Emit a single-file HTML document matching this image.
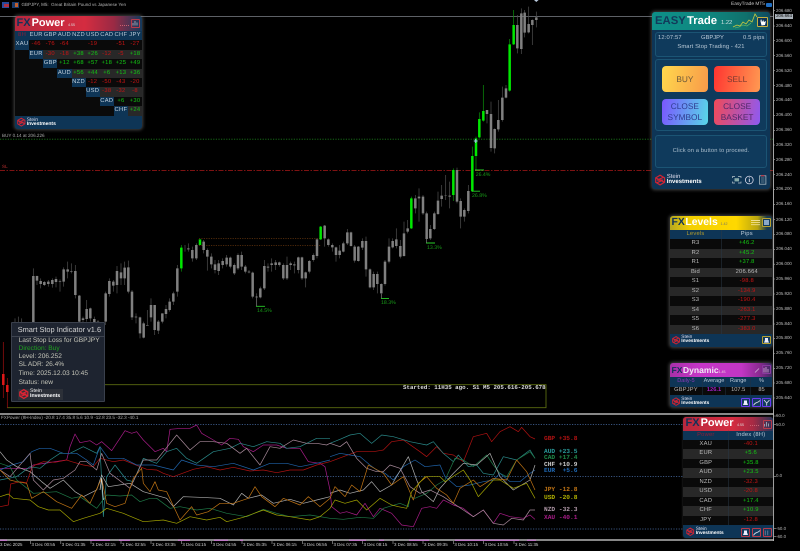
<!DOCTYPE html>
<html><head><meta charset="utf-8"><title>EasyTrade MT5</title>
<style>
html,body{margin:0;padding:0;background:#000;}
body{position:relative;width:800px;height:551px;overflow:hidden;font-family:"Liberation Sans",sans-serif;color:#ccc;text-rendering:geometricPrecision;}
#w{position:absolute;left:0;top:0;width:800px;height:551px;filter:blur(.32px);}
svg{position:absolute;left:0;top:0;overflow:visible;}
.t{position:absolute;white-space:nowrap;line-height:1;}
.p{position:absolute;box-sizing:border-box;border-radius:3px;background:#0e3556;box-shadow:0 0 3px 1px rgba(150,150,150,.45);}
.h{position:absolute;box-sizing:border-box;border-radius:3px 3px 0 0;}
.u{position:absolute;background:#0a0a0a;}
.a{position:absolute;left:776px;font-size:4.4px;color:#bbb;white-space:nowrap;line-height:1;}
.x{position:absolute;top:543px;font-size:4.4px;color:#ccc;white-space:nowrap;line-height:1;}
.m{position:absolute;left:15px;width:127.3px;height:9.45px;display:flex;font-size:5.8px;letter-spacing:.3px;line-height:9.45px;}
.m>*{width:14.14px;flex:none;text-align:center;font-style:normal;font-weight:normal;}
.k{background:#0a0a0a;}
.l{background:#0e3556;color:#c4d2de;}
.g{background:#282828;}.d{background:#0a0a0a;}
.n{color:#c81414;}.y{color:#14c814;}
.r{position:absolute;height:9.47px;display:flex;font-size:5.8px;letter-spacing:.2px;line-height:9.47px;color:#bbb;}
.r>span{text-align:center;display:block;}
.c1{width:51.6px;box-sizing:border-box;}.c2{width:51px;}
.b1{width:45px;box-sizing:border-box;}.b2{width:45px;}
.lb{position:absolute;font-size:6.2px;font-family:"Liberation Mono",monospace;white-space:pre;line-height:1;font-weight:bold;}
.btn{position:absolute;box-sizing:border-box;border-radius:4px;width:45.7px;height:26px;font-size:8.3px;line-height:11px;text-align:center;display:flex;align-items:center;justify-content:center;}
.bx{position:absolute;box-sizing:border-box;left:655.3px;width:112px;border:1px solid #1b5474;border-radius:3px;background:#0f3a5c;}
.ib{position:absolute;box-sizing:border-box;width:9px;height:8.6px;border-radius:1px;}
</style></head><body><div id="w">

<!-- top bar -->
<div style="position:absolute;left:2px;top:2px;width:7px;height:6px;background:#2a4a9a"></div>
<div style="position:absolute;left:4px;top:4px;width:5px;height:3px;background:#b03040"></div>
<div style="position:absolute;left:12px;top:2px;width:7px;height:6px;background:#1a3a6a"></div>
<div style="position:absolute;left:15px;top:3px;width:3px;height:4px;background:#c06030"></div>
<div class="t" style="left:21.5px;top:3px;font-size:4.5px;color:#b4b4b4">GBPJPY, M5:&nbsp; Great Britain Pound vs Japanese Yen</div>
<div class="t" style="left:731px;top:3px;font-size:4.8px;color:#c4c4c4">EasyTrade MT5</div>
<div style="position:absolute;left:766px;top:3px;width:6px;height:4px;background:#1f6fc4;border-radius:1px"></div>
<div style="position:absolute;left:0;top:16px;width:773px;height:.8px;background:#5d6066"></div>

<svg width="800" height="551">
 <path d="M0 139.2H773" stroke="#1a7a1a" stroke-width=".8" stroke-dasharray="1.2 1.4" fill="none"/>
 <path d="M0 170.6H773" stroke="#a81818" stroke-width=".8" stroke-dasharray="5 1.5 1.5 1.5" fill="none"/>
 <path d="M199 238.3H321M199 245.7H321" stroke="#7a4012" stroke-width=".7" stroke-dasharray="1.2 1.2" fill="none"/>
 <path d="M105 384.7H546V407.7H7" stroke="#5a6a10" stroke-width=".9" fill="none"/>
 <path d="M3.3 342V374M3.3 385V398M7.3 378V408" stroke="#a01010" stroke-width=".7"/>
 <path d="M3.3 374V385M7.3 385V392" stroke="#e01818" stroke-width="2.5"/>
 <g transform="translate(0,210) scale(.33333)" fill="none">
  <path stroke="#4c4c4c" stroke-width="2.2" d="M45 325V345M55 320V345M65 325V345M100 175V340M111 197V225M122 205V235M133 213V228M145 210V230M157 205V233M168 200V232M180 208V245M191 172V230M203 155V205M214 160V190M226 165V265M238 255V340M249 320V340M260 270V335M271 293V335M283 320V345M294 330V345M317 245V345M328 205V260M340 210V245M351 168V250M363 160V225M374 155V225M385 152V250M396 240V330M408 310V340M420 320V385M431 335V385M442 300V345M453 265V335M464 285V375M475 330V372M487 310V340M498 285V325M509 265V305M520 245V285M532 165V260M555 105V125M565 100V125M577 110V155M589 100V150M611 90V130M622 115V182M634 130V175M645 150V190M656 150V195M668 145V175M680 135V170M691 140V175M703 160V195M714 130V180M725 125V180M736 165V190M747 180V190M758 185V265M770 250V290M781 230V265M793 150V240M804 160V185M815 145V185M827 150V180M838 155V170M850 160V210M861 140V210M872 155V180M883 155V190M895 140V190M906 140V210M917 185V232M928 150V190M940 130V155M951 85V145M974 45V110M985 85V110"/>
  <path stroke="#808080" stroke-width="7.5" d="M100 198V340M111 198V212M122 213V222M133 216V225M145 215V222M157 210V222M168 207V216M180 213V215M191 178V215M203 178V185M214 183V185M226 183V255M238 257V335M249 325V330M260 297V327M271 295V325M283 327V338M294 335V340M317 250V335M328 213V252M340 215V227M351 183V225M363 187V205M374 173V205M385 172V245M396 245V322M408 320V322M420 322V370M431 340V383M442 345V347M453 285V322M464 285V360M475 335V362M487 310V335M498 297V312M509 275V300M520 250V275M532 175V245M565 115V118M577 120V145M589 105V145M611 95V120M622 120V140M634 140V163M645 163V180M656 160V183M668 153V165M680 143V163M691 143V170M703 165V190M714 135V175M725 135V170M736 170V185M747 185V187M758 188V260M770 260V262M781 235V262M793 168V235M804 170V173M815 160V165M827 157V165M838 157V165M850 165V205M861 165V205M872 160V165M883 163V166M895 142V180M906 142V205M917 187V205M928 153V185M940 135V150M951 88V138M974 47V85M985 88V105"/>
  <path stroke="#0a8a0a" stroke-width="2.2" d="M544 105V185M962 48V90"/>
  <path stroke="#00e800" stroke-width="7.5" d="M544 113V175M600 88V105M962 50V88"/>
 </g>
 <g transform="translate(330,130) scale(.33333)" fill="none">
  <path stroke="#4c4c4c" stroke-width="2.2" d="M7 340V365M18 350V395M29 345V385M40 335V367M52 297V345M63 305V350M74 345V398M85 348V395M97 325V360M108 320V440M120 415V475M131 425V480M142 425V490M154 460V505M165 390V467M177 325V400M188 325V355M199 295V355M211 330V385M222 275V380M233 270V310M256 195V250M267 175V275M279 195V255M290 245V340M301 285V330M313 245V300M324 185V255M335 165V230M347 135V210M359 155V235M381 113V220M392 205V295M403 235V275M415 165V250"/>
  <path stroke="#808080" stroke-width="7.5" d="M7 345V352M18 352V375M29 362V375M40 340V365M52 307V340M63 307V348M74 350V392M85 350V393M97 333V353M108 333V418M120 418V472M131 432V472M142 432V462M154 462V490M165 395V462M177 350V395M188 333V352M199 328V348M211 348V380M222 310V378M233 295V305M256 205V235M267 200V205M279 200V250M290 250V327M301 297V325M313 250V297M324 212V252M335 197V207M347 197V198M359 197V200M381 120V215M392 213V260M403 240V260M415 183V243"/>
  <path stroke="#0a8a0a" stroke-width="2.2" d="M244 200V297M370 115V213M427 50V186M438 20V120"/>
  <path stroke="#00e800" stroke-width="7.5" d="M244 205V295M370 120V195M427 78V183M438 25V78"/>
 </g>
 <g transform="translate(440,0) scale(.33333)" fill="none">
  <path stroke="#4c4c4c" stroke-width="2.2" d="M141 330V370M153 305V455M164 385V460M175 300V395M187 260V365M198 255V295M232 45V160M244 25V162M254 30V112M266 20V100M277 58V135M289 35V82"/>
  <path stroke="#808080" stroke-width="7.5" d="M141 330V342M153 342V444M164 387V445M175 360V388M187 293V360M198 265V293M232 75V145M244 40V147M254 38V98M266 72V97M277 60V75M289 52V60"/>
  <path stroke="#0a8a0a" stroke-width="2.2" d="M118 337V415M130 255V365M209 117V275M221 30V135"/>
  <path stroke="#00e800" stroke-width="7.5" d="M118 357V412M130 333V362M209 133V272M221 75V133"/>
 </g>
 <path d="M256 306.3H265M381 298.6H389M426 243H435M471.5 191.2H480M475 170H484" stroke="#28d028" stroke-width=".9" fill="none"/>
 <path d="M256.5 306V296M381.5 298V294M426.5 243V238" stroke="#777" stroke-width=".5" fill="none"/>
 <path d="M473.8 141H477.6M475.7 139V143" stroke="#9fc0e8" stroke-width="1"/>
 <path d="M534 0H538.6L536.3 2Z" fill="#b8c8dc"/>
</svg>

<div class="t" style="left:2px;top:133.6px;font-size:4.6px;color:#aaa">BUY 0.14 at 206.226</div>
<div class="t" style="left:2px;top:165px;font-size:4.6px;color:#c03030">SL</div>
<div class="t" style="left:257px;top:308.5px;font-size:5.2px;color:#189a18">14.5%</div>
<div class="t" style="left:381px;top:301.2px;font-size:5.2px;color:#189a18">18.3%</div>
<div class="t" style="left:427px;top:246.2px;font-size:5.2px;color:#189a18">13.3%</div>
<div class="t" style="left:472px;top:194.2px;font-size:5.2px;color:#189a18">26.8%</div>
<div class="t" style="left:475.7px;top:172.8px;font-size:5.2px;color:#189a18">26.4%</div>
<div class="t" style="left:403px;top:385.4px;font-size:5.8px;font-family:'Liberation Mono',monospace;font-weight:bold;color:#ddd">Started: 11H35 ago. S1 M5 205.616-205.678</div>

<!-- indicator window -->
<div style="position:absolute;left:0;top:413px;width:774px;height:2.2px;background:#888"></div>
<div style="position:absolute;left:0;top:539px;width:774px;height:2.4px;background:#888"></div>
<svg width="800" height="551">
 <path d="M0 540.3H7M90 540.3H110M119 540.3H130M178 540.3H190M214 540.3H228M240 540.3H243M349 540.3H366M379 540.3H384M409 540.3H429M455 540.3H519M527 540.3H536" stroke="#d070d8" stroke-width="1" fill="none"/>
 <path d="M0 424.6H683M0 476.6H683M0 529H683" stroke="#4a6fa8" stroke-width=".7" stroke-dasharray="1.2 1.4" fill="none"/>
 <g transform="translate(0,410) scale(.33333)" fill="none" stroke-width="2.1" stroke-linejoin="round">
  <polyline stroke="#a81c88" points="0,175 90,175 100,165 200,150 210,110 225,72 240,98 270,92 290,105 305,95 335,122 375,62 395,70 410,65 430,90 465,125 490,115 500,125 510,58 545,55 570,55 590,45 605,70 640,90 665,105 690,85 715,88 730,110 760,125 790,105 830,105 860,115 900,115 925,155 960,160 975,170 990,240"/>
  <polyline stroke="#b01212" points="0,290 25,285 32,222 60,215 80,218 95,175 105,165 130,155 165,157 200,150 215,155 250,165 280,170 300,145 340,155 370,150 420,170 440,178 470,180 490,190 520,200 580,178 620,170 660,180 700,172 750,183 790,180 830,188 870,180 910,180 950,165 990,155"/>
  <polyline stroke="#2a8a8a" points="0,210 50,200 90,170 120,175 150,150 180,130 210,130 250,110 290,130 300,110 310,320 320,200 345,165 380,210 400,215 430,145 470,160 500,125 530,115 560,145 590,160 640,125 690,115 720,100 760,110 800,95 840,100 860,115 900,110 950,85 990,85"/>
  <polyline stroke="#1f7a48" points="0,160 30,170 50,210 100,250 170,245 215,265 240,260 290,295 320,255 360,258 395,255 420,275 450,265 470,265 510,295 540,290 590,300 630,295 680,310 740,320 790,298 830,310 870,320 930,315 990,325"/>
  <polyline stroke="#1f62a8" points="0,180 35,165 70,155 95,125 120,115 150,115 190,130 230,130 260,150 280,165 300,110 325,145 370,145 410,165 460,165 520,180 545,150 590,165 640,170 700,160 760,180 810,160 860,160 900,170 950,160 990,150"/>
  <polyline stroke="#aeaeae" points="0,125 20,150 50,170 90,185 125,215 150,235 190,210 225,245 250,260 290,240 305,195 325,230 390,220 430,245 500,265 520,290 550,260 600,262 660,265 700,285 725,250 745,265 785,255 820,280 870,268 910,280 950,270 990,260"/>
  <polyline stroke="#a88a9a" points="0,180 30,200 90,130 100,210 130,240 160,210 190,205 225,180 240,155 260,155 290,180 305,130 330,190 390,235 430,150 470,150 490,125 530,75 570,120 600,95 640,95 680,100 720,130 740,115 780,165 810,110 840,115 880,90 920,100 950,100 980,105 990,100"/>
  <polyline stroke="#c07414" points="0,180 30,210 50,215 80,220 95,265 130,245 170,275 215,295 245,255 270,280 305,205 320,280 345,290 375,280 400,205 425,175 430,220 450,245 465,215 475,240 500,245 540,330 575,290 590,315 625,305 660,280 700,280 745,265 765,230 785,260 825,290 850,265 900,285 925,260 960,290 990,265"/>
  <polyline stroke="#a2a200" points="0,260 25,252 40,265 90,270 115,290 145,300 180,300 220,335 250,325 300,310 320,295 370,310 430,335 490,330 530,340 570,320 620,330 660,322 680,335 730,322 790,300 830,315 870,320 930,330 960,320 990,295"/>
  <polyline stroke="#d8d8d8" points="300,240 305,205 310,270"/>
 </g>
 <g transform="translate(330,410) scale(.33333)" fill="none" stroke-width="2.1" stroke-linejoin="round">
  <polyline stroke="#a81c88" points="0,240 5,290 30,310 50,305 80,315 105,280 130,320 150,295 185,310 215,345 250,350 275,295 300,290 320,295 340,270 370,285 400,295 430,320 460,300 490,340 510,310 540,320 580,325 600,315 615,328"/>
  <polyline stroke="#b01212" points="0,155 40,140 80,125 130,125 160,120 185,95 220,90 270,125 290,140 320,110 340,130 370,135 400,155 430,80 470,70 485,95 510,65 540,50 565,65 575,52 600,80 615,87"/>
  <polyline stroke="#2a8a8a" points="0,100 30,88 60,75 90,70 125,100 155,75 190,80 240,95 290,105 310,95 340,130 370,155 385,135 415,170 440,165 460,190 490,195 520,140 560,150 600,120 615,145"/>
  <polyline stroke="#1f7a48" points="0,325 40,328 90,322 130,325 160,295 210,280 235,290 240,260 255,265 290,250 320,225 345,210 375,145 400,150 430,170 470,135 490,165 510,190 530,200 560,150 600,125 615,145"/>
  <polyline stroke="#1f62a8" points="0,140 30,130 60,135 90,140 120,165 140,180 165,190 190,210 220,170 255,150 285,170 330,165 345,200 380,230 420,225 460,215 490,210 510,190 540,215 570,215 600,190 615,180"/>
  <polyline stroke="#aeaeae" points="0,250 30,240 60,250 100,240 125,215 150,245 185,225 235,140 260,210 275,245 310,275 330,235 370,190 400,160 440,165 480,130 510,200 550,240 600,210 615,165"/>
  <polyline stroke="#a88a9a" points="0,100 30,110 50,95 80,145 110,175 140,185 160,185 180,165 210,175 240,230 270,250 300,240 340,260 370,280 400,300 430,320 460,300 490,340 520,345 545,325 580,330 600,300 615,300"/>
  <polyline stroke="#c07414" points="0,265 15,230 45,260 65,225 90,245 115,165 160,190 185,225 220,200 250,270 265,220 290,200 320,235 350,255 370,280 390,235 430,210 450,230 490,205 530,210 560,150 590,185 615,240"/>
  <polyline stroke="#a2a200" points="0,295 15,270 45,280 80,270 110,300 150,265 185,285 205,290 230,295 245,245 285,200 330,200 345,215 400,180 420,210 445,260 490,210 510,210 550,235 590,220 615,265"/>
 </g>
 <path d="M773.5 0V541" stroke="#b8b8b8" stroke-width=".9" fill="none"/>
 <path d="M773 10.7h2M773 26h2M773 40.7h2M773 55.7h2M773 70.7h2M773 85.7h2M773 100.3h2M773 115.3h2M773 130.3h2M773 145h2M773 159.7h2M773 174.7h2M773 189.3h2M773 204.6h2M773 219.7h2M773 234.5h2M773 249.4h2M773 264.2h2M773 279h2M773 294h2M773 309h2M773 324h2M773 338.6h2M773 353.5h2M773 368.4h2M773 383h2M773 398h2M774 416h2M774 424.7h2M774 476.4h2M774 528.7h2M774 536.7h2" stroke="#aaa" stroke-width=".6" fill="none"/>
 <path d="M30.5 541v3M60.8 541v3M91 541v3M121 541v3M151 541v3M181.4 541v3M211.6 541v3M242 541v3M272 541v3M302.4 541v3M332.5 541v3M362.6 541v3M393 541v3M423 541v3M453.4 541v3M483.6 541v3M514 541v3" stroke="#aaa" stroke-width=".6" fill="none"/>
</svg>
<div class="t" style="left:1px;top:416px;font-size:4.6px;color:#aaa">FXPower (8H-Index) -20.8 17.4 35.8 5.6 10.9 -12.8 23.5 -32.3 -40.1</div>
<div class="lb" style="left:544px;top:436px;color:#b01212">GBP +35.8</div>
<div class="lb" style="left:544px;top:449px;color:#2a9a9a">AUD +23.5</div>
<div class="lb" style="left:544px;top:455.4px;color:#1f8a4a">CAD +17.4</div>
<div class="lb" style="left:544px;top:461.6px;color:#c8c8c8">CHF +10.9</div>
<div class="lb" style="left:544px;top:468px;color:#1f6ab8">EUR&nbsp; +5.6</div>
<div class="lb" style="left:544px;top:487px;color:#c07414">JPY -12.8</div>
<div class="lb" style="left:544px;top:495px;color:#b0b000">USD -20.8</div>
<div class="lb" style="left:544px;top:507px;color:#b098a8">NZD -32.3</div>
<div class="lb" style="left:544px;top:515px;color:#a81c88">XAU -40.1</div>

<div class="a" style="top:8.5px">206.680</div><div class="a" style="top:23.8px">206.640</div><div class="a" style="top:38.5px">206.600</div><div class="a" style="top:53.5px">206.560</div><div class="a" style="top:68.5px">206.520</div><div class="a" style="top:83.5px">206.480</div><div class="a" style="top:98.1px">206.440</div><div class="a" style="top:113.1px">206.400</div><div class="a" style="top:128.1px">206.360</div><div class="a" style="top:142.8px">206.320</div><div class="a" style="top:157.5px">206.280</div><div class="a" style="top:172.5px">206.240</div><div class="a" style="top:187.1px">206.200</div><div class="a" style="top:202.4px">206.160</div><div class="a" style="top:217.5px">206.120</div><div class="a" style="top:232.3px">206.080</div><div class="a" style="top:247.2px">206.040</div><div class="a" style="top:262px">206.000</div><div class="a" style="top:276.8px">205.960</div><div class="a" style="top:291.8px">205.920</div><div class="a" style="top:306.8px">205.880</div><div class="a" style="top:321.8px">205.840</div><div class="a" style="top:336.4px">205.800</div><div class="a" style="top:351.3px">205.760</div><div class="a" style="top:366.2px">205.720</div><div class="a" style="top:380.8px">205.680</div><div class="a" style="top:395.8px">205.640</div>
<div class="a" style="top:14px;left:775px;width:18px;height:5px;background:#aab2ba;color:#111;text-align:center">206.664</div>
<div class="a" style="top:413.8px">60.0</div><div class="a" style="top:422.5px">50.0</div><div class="a" style="top:474.2px">0.0</div><div class="a" style="top:526.5px">-50.0</div><div class="a" style="top:534.5px">-60.0</div>

<div class="x" style="left:0">3 Dec 2025</div><div class="x" style="left:31.5px">3 Dec 00:55</div><div class="x" style="left:61.8px">3 Dec 01:35</div><div class="x" style="left:92px">3 Dec 02:15</div><div class="x" style="left:122px">3 Dec 02:55</div><div class="x" style="left:152px">3 Dec 03:35</div><div class="x" style="left:182.4px">3 Dec 04:15</div><div class="x" style="left:212.6px">3 Dec 04:55</div><div class="x" style="left:243px">3 Dec 05:35</div><div class="x" style="left:273px">3 Dec 06:15</div><div class="x" style="left:303.4px">3 Dec 06:55</div><div class="x" style="left:333.5px">3 Dec 07:35</div><div class="x" style="left:363.6px">3 Dec 08:15</div><div class="x" style="left:394px">3 Dec 08:55</div><div class="x" style="left:424px">3 Dec 09:35</div><div class="x" style="left:454.4px">3 Dec 10:15</div><div class="x" style="left:484.6px">3 Dec 10:55</div><div class="x" style="left:515px">3 Dec 11:35</div>

<!-- FXPower matrix panel -->
<div class="p" style="left:15px;top:16px;width:127.3px;height:113px"></div>
<div class="u" style="left:15px;top:40.15px;width:127.3px;height:75.6px"></div>
<div class="h" style="left:15px;top:16px;width:127.3px;height:14.8px;background:linear-gradient(90deg,#b8283e 0,#d42c40 55%,#9a2a44 78%,#143a5c 100%)"></div>
<div class="t" style="left:16.5px;top:17.8px;font-size:11px;font-weight:bold;color:#123258">FX<span style="color:#fff;margin-left:1px">Power</span></div>
<div class="t" style="left:68px;top:23.5px;font-size:3.6px;color:#ddd">4.55</div>
<div style="position:absolute;left:120px;top:24.5px;width:9px;height:1px;background:repeating-linear-gradient(90deg,#c86070 0 1px,transparent 1px 2px)"></div>
<div class="ib" style="left:131px;top:19px;border:.8px solid #b83a4a"></div>
<svg width="800" height="551"><path d="M133 25.5V23M135 25.5V21M137 25.5V22.5" stroke="#9ab" stroke-width=".9"/></svg>
<div class="m" style="top:30.7px;background:#0e3556;color:#b8c8d6"><span style="color:#8a2038">8H</span><span>EUR</span><span>GBP</span><span>AUD</span><span>NZD</span><span>USD</span><span>CAD</span><span>CHF</span><span>JPY</span></div>
<div class="m d" style="top:40.15px"><span class="l">XAU</span><i class="n">-46</i><i class="n">-76</i><i class="n">-64</i><i></i><i class="n">-19</i><i></i><i class="n">-51</i><i class="n">-27</i></div>
<div class="m g" style="top:49.6px"><i class="k"></i><span class="l">EUR</span><i class="n">-30</i><i class="n">-18</i><i class="y">+38</i><i class="y">+26</i><i class="n">-12</i><i class="n">-5</i><i class="y">+18</i></div>
<div class="m d" style="top:59.05px"><i class="k"></i><i class="k"></i><span class="l">GBP</span><i class="y">+12</i><i class="y">+68</i><i class="y">+57</i><i class="y">+18</i><i class="y">+25</i><i class="y">+49</i></div>
<div class="m g" style="top:68.5px"><i class="k"></i><i class="k"></i><i class="k"></i><span class="l">AUD</span><i class="y">+56</i><i class="y">+44</i><i class="y">+6</i><i class="y">+13</i><i class="y">+36</i></div>
<div class="m d" style="top:77.95px"><i class="k"></i><i class="k"></i><i class="k"></i><i class="k"></i><span class="l">NZD</span><i class="n">-12</i><i class="n">-50</i><i class="n">-43</i><i class="n">-20</i></div>
<div class="m g" style="top:87.4px"><i class="k"></i><i class="k"></i><i class="k"></i><i class="k"></i><i class="k"></i><span class="l">USD</span><i class="n">-38</i><i class="n">-32</i><i class="n">-8</i></div>
<div class="m d" style="top:96.85px"><i class="k"></i><i class="k"></i><i class="k"></i><i class="k"></i><i class="k"></i><i class="k"></i><span class="l">CAD</span><i class="y">+6</i><i class="y">+30</i></div>
<div class="m g" style="top:106.3px"><i class="k"></i><i class="k"></i><i class="k"></i><i class="k"></i><i class="k"></i><i class="k"></i><i class="k"></i><span class="l">CHF</span><i class="y">+24</i></div>
<svg width="800" height="551"><g transform="translate(16.8,117.6) scale(.9)" fill="none" stroke="#d02434" stroke-width="1.1"><path d="M1 3L5 .6 9 3V7L5 9.4 1 7ZM1.5 3.2L8.5 6.8M8.2 2.4L2.5 5 7.5 5 1.8 7.6"/></g></svg>
<div class="t" style="left:26.7px;top:117.6px;font-size:5px;color:#dde;line-height:4.3px"><span>Stein</span><br><b style="color:#fff">Investments</b></div>

<!-- EasyTrade panel -->
<div class="p" style="left:652.3px;top:12.3px;width:117.7px;height:177px"></div>
<div class="h" style="left:652.3px;top:12.3px;width:117.7px;height:17.7px;background:linear-gradient(90deg,#0e8f88 0,#0f8880 45%,#10706c 80%,#0f4a60 100%)"></div>
<svg width="800" height="551"><polyline points="733,27 737,25 740,26 743,22 746,24 749,20 752,22 755,14 757,17" fill="none" stroke="#c8c840" stroke-width=".8"/><polyline points="735,28 739,27 743,25 747,26 751,23" fill="none" stroke="#6fbf60" stroke-width=".6"/></svg>
<div class="t" style="left:655px;top:15.6px;font-size:11.3px;font-weight:bold;color:#123a5a">EASY<span style="color:#fff;margin-left:1.2px">Trade</span></div>
<div class="t" style="left:721px;top:20.5px;font-size:5.8px;color:#d4e4e4">1.22</div>
<div class="ib" style="left:757px;top:16.7px;width:11px;height:10.6px;border:.8px solid #c8b040;background:#0e3556"></div>
<svg width="800" height="551"><path d="M760 19L761.5 22 761 19 763 22 764 19.5 764 22 766 21 765 25 761.5 25.5Z" fill="#fff"/></svg>
<div class="bx" style="top:32.3px;height:24.4px"></div>
<div class="t" style="left:658px;top:35.7px;font-size:5.8px;color:#b8c8d6;letter-spacing:.15px">12:07:57</div>
<div class="t" style="left:701px;top:35.7px;font-size:5.8px;color:#b8c8d6">GBPJPY</div>
<div class="t" style="right:35.5px;top:35.7px;font-size:5.8px;color:#b8c8d6;letter-spacing:.15px">0.5 pips</div>
<div class="t" style="left:655px;width:112px;text-align:center;top:44.6px;font-size:5.8px;color:#b8c8d6;letter-spacing:.1px">Smart Stop Trading - 421</div>
<div class="bx" style="top:59.3px;height:71.7px"></div>
<div class="btn" style="left:662px;top:66px;background:linear-gradient(100deg,#ffd84c,#f89a4a);color:#6e5a3a">BUY</div>
<div class="btn" style="left:714.3px;top:66px;background:linear-gradient(100deg,#ff3430,#ff9a52);color:#7a3a30">SELL</div>
<div class="btn" style="left:662px;top:99px;background:linear-gradient(100deg,#7a56ff,#58d8e8);color:#303c90">CLOSE<br>SYMBOL</div>
<div class="btn" style="left:714.3px;top:99px;background:linear-gradient(100deg,#f04a58,#8e5af2);color:#502868">CLOSE<br>BASKET</div>
<div class="bx" style="top:135px;height:33.3px"></div>
<div class="t" style="left:655px;width:112px;text-align:center;top:149px;font-size:5.8px;color:#a8bccb;letter-spacing:.1px">Click on a button to proceed.</div>
<svg width="800" height="551"><g transform="translate(654.6,174.6) scale(1.1)" fill="none" stroke="#d02434" stroke-width="1.1"><path d="M1 3L5 .6 9 3V7L5 9.4 1 7ZM1.5 3.2L8.5 6.8M8.2 2.4L2.5 5 7.5 5 1.8 7.6"/></g>
<path d="M732.5 178V176.5H735M738 176.5H741V178M741 181.5V183H738M735 183H732.5V181.5" fill="none" stroke="#b8c4cc" stroke-width=".7"/><rect x="734.5" y="178.2" width="4.5" height="3.2" fill="#8aa"/>
<circle cx="749.3" cy="180" r="3.9" fill="none" stroke="#dde" stroke-width=".8"/><path d="M749.3 178.8V182M749.3 177.4v.7" stroke="#dde" stroke-width=".9"/>
<rect x="759.5" y="175.8" width="6.4" height="8.4" fill="none" stroke="#a8b8c0" stroke-width=".8"/><path d="M761 178H764.5M761 180H764.5M761 182H764.5" stroke="#a8b8c0" stroke-width=".5"/><rect x="761" y="175" width="3.4" height="1.4" fill="#b04050"/></svg>
<div class="t" style="left:666.7px;top:175.4px;font-size:6px;color:#dde;line-height:5px">Stein<br><b style="color:#fff">Investments</b></div>

<!-- FXLevels panel -->
<div class="p" style="left:669.7px;top:215.7px;width:102.6px;height:131.6px"></div>
<div class="u" style="left:669.7px;top:239.4px;width:102.6px;height:94.6px"></div>
<div class="h" style="left:669.7px;top:215.7px;width:102.6px;height:14.6px;background:linear-gradient(90deg,#b8a820 0,#f4d000 20%,#ffd800 65%,#b8a410 86%,#183a50 95%)"></div>
<div class="t" style="left:671.5px;top:217.6px;font-size:10.4px;font-weight:bold;color:#103258">FX<span style="color:#fff;margin-left:.6px">Levels</span></div>
<div class="t" style="left:720.5px;top:223px;font-size:3.6px;color:#776">1.42</div>
<svg width="800" height="551"><path d="M751 220.5H760M751 222.6H760M751 224.7H760" stroke="#f0e090" stroke-width=".9"/></svg>
<div class="ib" style="left:762px;top:218px;border:.8px solid #b8a030;background:#123a5c"></div>
<div style="position:absolute;left:764px;top:219.6px;width:5px;height:5.4px;background:#8aa8c8"></div>
<div class="r" style="left:669.7px;width:102.6px;top:230.1px;background:#0e3556"><span class="c1" style="color:#b09a30">Levels</span><span class="c2" style="color:#b8c8d6">Pips</span></div>
<div class="r d" style="left:669.7px;width:102.6px;top:239.4px"><span class="c1">R3</span><span class="c2 y">+46.2</span></div>
<div class="r g" style="left:669.7px;width:102.6px;top:248.85px"><span class="c1">R2</span><span class="c2 y">+45.2</span></div>
<div class="r d" style="left:669.7px;width:102.6px;top:258.3px"><span class="c1">R1</span><span class="c2 y">+37.8</span></div>
<div class="r g" style="left:669.7px;width:102.6px;top:267.8px"><span class="c1">Bid</span><span class="c2">206.664</span></div>
<div class="r d" style="left:669.7px;width:102.6px;top:277.25px"><span class="c1">S1</span><span class="c2 n">-98.8</span></div>
<div class="r g" style="left:669.7px;width:102.6px;top:286.7px"><span class="c1">S2</span><span class="c2 n">-134.9</span></div>
<div class="r d" style="left:669.7px;width:102.6px;top:296.15px"><span class="c1">S3</span><span class="c2 n">-190.4</span></div>
<div class="r g" style="left:669.7px;width:102.6px;top:305.6px"><span class="c1">S4</span><span class="c2 n">-263.1</span></div>
<div class="r d" style="left:669.7px;width:102.6px;top:315.05px"><span class="c1">S5</span><span class="c2 n">-277.3</span></div>
<div class="r g" style="left:669.7px;width:102.6px;top:324.5px"><span class="c1">S6</span><span class="c2 n">-383.0</span></div>
<svg width="800" height="551"><path d="M721.3 230.1V334" stroke="#2a3a48" stroke-width=".5"/><g transform="translate(671.8,336) scale(.85)" fill="none" stroke="#d02434" stroke-width="1.1"><path d="M1 3L5 .6 9 3V7L5 9.4 1 7ZM1.5 3.2L8.5 6.8M8.2 2.4L2.5 5 7.5 5 1.8 7.6"/></g></svg>
<div class="t" style="left:681.3px;top:336.2px;font-size:4.8px;color:#dde;line-height:4.1px">Stein<br><b style="color:#fff">Investments</b></div>
<div class="ib" style="left:762px;top:335.7px;border:.8px solid #b8a030;background:#123a5c"></div>
<svg width="800" height="551"><path d="M764 342.6H769L768 340V338H765V340Z" fill="#eef"/></svg>

<!-- FXDynamic panel -->
<div class="p" style="left:669.7px;top:363.3px;width:102.6px;height:43.4px"></div>
<div class="h" style="left:669.7px;top:363.3px;width:102.6px;height:14px;background:linear-gradient(90deg,#a830a8 0,#c636c8 30%,#c236c4 70%,#8a2a90 88%,#3a2a60 100%)"></div>
<div class="t" style="left:671.5px;top:366.2px;font-size:8.6px;font-weight:bold;color:#143058">FX<span style="color:#f0e8f4;margin-left:.4px">Dynamic</span></div>
<div class="t" style="left:718.5px;top:371px;font-size:3.6px;color:#ecd">1.45</div>
<div class="ib" style="left:762px;top:365.4px;border:.8px solid #8a3aa0"></div>
<svg width="800" height="551"><path d="M764 372.5V368M766 372.5V367M768 372.5V369M755 372.5L759 368.5" stroke="#cfb0d8" stroke-width=".8" fill="none"/></svg>
<div style="position:absolute;left:669.7px;top:377.3px;width:102.6px;height:9.4px;background:#0e3556"></div>
<div class="t" style="left:669.7px;width:32.6px;text-align:center;top:379px;font-size:5.6px;color:#8a3ab8">Daily-5</div>
<div class="t" style="left:702.3px;width:23.4px;text-align:center;top:379px;font-size:5.6px;color:#b8c8d6">Average</div>
<div class="t" style="left:725.7px;width:25px;text-align:center;top:379px;font-size:5.6px;color:#b8c8d6">Range</div>
<div class="t" style="left:750.7px;width:21.6px;text-align:center;top:379px;font-size:5.6px;color:#b8c8d6">%</div>
<div style="position:absolute;left:669.7px;top:386.7px;width:102.6px;height:8.7px;background:#0a0a0a"></div>
<div class="t" style="left:669.7px;width:32.6px;text-align:center;top:388.2px;font-size:5.7px;color:#bbb;letter-spacing:.2px">GBPJPY</div>
<div class="t" style="left:702.3px;width:23.4px;text-align:center;top:388.2px;font-size:5.7px;color:#a020c0;font-weight:bold">126.1</div>
<div class="t" style="left:725.7px;width:25px;text-align:center;top:388.2px;font-size:5.7px;color:#bbb">107.5</div>
<div class="t" style="left:750.7px;width:21.6px;text-align:center;top:388.2px;font-size:5.7px;color:#bbb">85</div>
<svg width="800" height="551"><path d="M702.3 377.3V395.4M725.7 377.3V395.4M750.7 377.3V395.4" stroke="#234" stroke-width=".5"/><g transform="translate(671.8,397.4) scale(.85)" fill="none" stroke="#d02434" stroke-width="1.1"><path d="M1 3L5 .6 9 3V7L5 9.4 1 7ZM1.5 3.2L8.5 6.8M8.2 2.4L2.5 5 7.5 5 1.8 7.6"/></g></svg>
<div class="t" style="left:681.3px;top:397.6px;font-size:4.8px;color:#dde;line-height:4.1px">Stein<br><b style="color:#fff">Investments</b></div>
<div class="ib" style="left:741px;top:398.2px;border:.8px solid #6a3af0;background:#123a5c"></div>
<div class="ib" style="left:752px;top:398.2px;border:.8px solid #6a3af0;background:#123a5c"></div>
<div class="ib" style="left:762.3px;top:398.2px;border:.8px solid #6a3af0;background:#123a5c"></div>
<svg width="800" height="551"><path d="M743 405H748L747 402.5V400.5H744V402.5Z" fill="#eef"/><path d="M753.5 405.4C756 401 757 404 760 400.5" stroke="#dde" stroke-width=".9" fill="none"/><path d="M764 400L766.7 403 769.5 400M766.7 403V405.6" stroke="#dde" stroke-width=".9" fill="none"/></svg>

<!-- FXPower table panel -->
<div class="p" style="left:683.3px;top:416.7px;width:90px;height:121.6px;box-shadow:0 0 2px rgba(120,120,120,.4)"></div>
<div class="u" style="left:683.3px;top:440px;width:90px;height:85px"></div>
<div class="h" style="left:683.3px;top:416.7px;width:90px;height:14.2px;background:linear-gradient(90deg,#b8283e 0,#d42c40 55%,#a62a44 78%,#2a3458 100%)"></div>
<div class="t" style="left:685.5px;top:418.4px;font-size:11px;font-weight:bold;color:#123258">FX<span style="color:#fff;margin-left:1px">Power</span></div>
<div class="t" style="left:737px;top:424px;font-size:3.6px;color:#ddd">4.55</div>
<div style="position:absolute;left:750px;top:425px;width:9px;height:1px;background:repeating-linear-gradient(90deg,#c86070 0 1px,transparent 1px 2px)"></div>
<div class="ib" style="left:762.5px;top:420px;border:.8px solid #b83a4a"></div>
<svg width="800" height="551"><path d="M764.5 426.5V424M766.5 426.5V422M768.5 426.5V423.5" stroke="#9ab" stroke-width=".9"/></svg>
<div class="r" style="left:683.3px;width:90px;top:430.7px;background:#0e3556"><span style="width:45px;color:#8a2038">Power</span><span style="width:45px;color:#b8c8d6">Index (8H)</span></div>
<div class="r d" style="left:683.3px;width:90px;top:440px"><span class="b1">XAU</span><span class="b2 n">-40.1</span></div>
<div class="r g" style="left:683.3px;width:90px;top:449.45px"><span class="b1">EUR</span><span class="b2 y">+5.6</span></div>
<div class="r d" style="left:683.3px;width:90px;top:458.9px"><span class="b1">GBP</span><span class="b2 y">+35.8</span></div>
<div class="r g" style="left:683.3px;width:90px;top:468.35px"><span class="b1">AUD</span><span class="b2 y">+23.5</span></div>
<div class="r d" style="left:683.3px;width:90px;top:477.8px"><span class="b1">NZD</span><span class="b2 n">-32.3</span></div>
<div class="r g" style="left:683.3px;width:90px;top:487.25px"><span class="b1">USD</span><span class="b2 n">-20.8</span></div>
<div class="r d" style="left:683.3px;width:90px;top:496.7px"><span class="b1">CAD</span><span class="b2 y">+17.4</span></div>
<div class="r g" style="left:683.3px;width:90px;top:506.15px"><span class="b1">CHF</span><span class="b2 y">+10.9</span></div>
<div class="r d" style="left:683.3px;width:90px;top:515.6px"><span class="b1">JPY</span><span class="b2 n">-12.8</span></div>
<svg width="800" height="551"><path d="M728.3 430.7V525" stroke="#2a3a48" stroke-width=".5"/><g transform="translate(686,527.5) scale(.85)" fill="none" stroke="#d02434" stroke-width="1.1"><path d="M1 3L5 .6 9 3V7L5 9.4 1 7ZM1.5 3.2L8.5 6.8M8.2 2.4L2.5 5 7.5 5 1.8 7.6"/></g></svg>
<div class="t" style="left:695.7px;top:527.8px;font-size:4.8px;color:#dde;line-height:4.1px">Stein<br><b style="color:#fff">Investments</b></div>
<div class="ib" style="left:741px;top:528.3px;border:.8px solid #b83a4a;background:#123a5c"></div>
<div class="ib" style="left:752px;top:528.3px;border:.8px solid #b83a4a;background:#123a5c"></div>
<div class="ib" style="left:762.5px;top:528.3px;border:.8px solid #b83a4a;background:#123a5c"></div>
<svg width="800" height="551"><path d="M743 535H748L747 532.5V530.5H744V532.5Z" fill="#eef"/><path d="M753.5 535.4C756 531 757 534 760 530.5" stroke="#dde" stroke-width=".9" fill="none"/><path d="M765.3 530.5V535.2M767.7 530.5V535.2" stroke="#5a7a98" stroke-width="1"/></svg>

<!-- Smart stop panel -->
<div style="position:absolute;left:11px;top:322.3px;width:94px;height:80px;box-sizing:border-box;background:#1e2430;border:.6px solid #3a404c;border-radius:1px"></div>
<div style="position:absolute;left:11px;top:335.6px;width:94px;height:.6px;background:#3e4450"></div>
<div class="t" style="left:17.7px;top:325.6px;font-size:7.4px;color:#d4d4d4">Smart Stop Indicator v1.6</div>
<div class="t" style="left:18.6px;top:337.6px;font-size:6.6px;color:#c4c4b8">Last Stop Loss for GBPJPY</div>
<div class="t" style="left:18.6px;top:345.9px;font-size:6.6px;color:#1fa01f">Direction: Buy</div>
<div class="t" style="left:18.6px;top:354.3px;font-size:6.6px;color:#c4c4b8">Level: 206.252</div>
<div class="t" style="left:18.6px;top:362.3px;font-size:6.6px;color:#c4c4b8">SL ADR: 26.4%</div>
<div class="t" style="left:18.6px;top:370.9px;font-size:6.6px;color:#c4c4b8">Time: 2025.12.03 10:45</div>
<div class="t" style="left:18.6px;top:379.6px;font-size:6.6px;color:#c4c4b8">Status: new</div>
<div style="position:absolute;left:18.4px;top:388.5px;width:45px;height:11px;background:#2c3038"></div>
<svg width="800" height="551"><g transform="translate(18.8,389) scale(1)" fill="none" stroke="#e02434" stroke-width="1.2"><path d="M1 3L5 .6 9 3V7L5 9.4 1 7ZM1.5 3.2L8.5 6.8M8.2 2.4L2.5 5 7.5 5 1.8 7.6"/></g></svg>
<div class="t" style="left:30px;top:389.3px;font-size:5.2px;color:#eee;line-height:4.4px">Stein<br><b style="color:#fff">Investments</b></div>

</div></body></html>
